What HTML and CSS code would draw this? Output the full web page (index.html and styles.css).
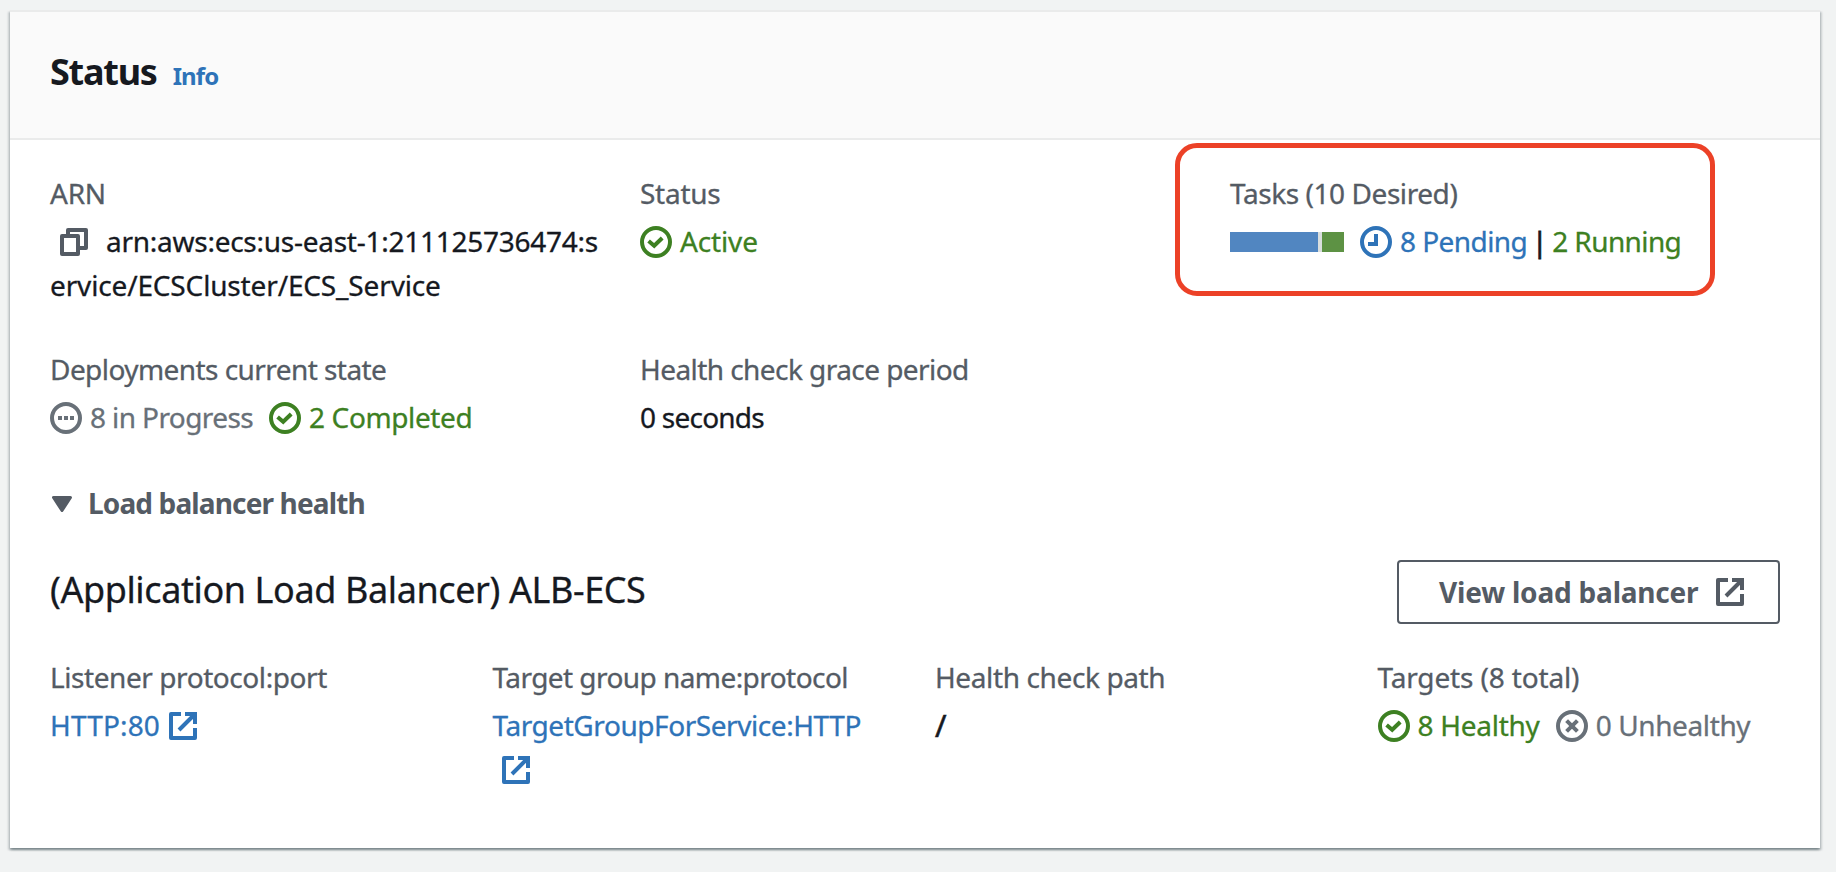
FILE: index.html
```
<!DOCTYPE html>
<html lang="en">
<head>
<meta charset="utf-8">
<title>Status</title>
<link rel="stylesheet" href="styles.css">
</head>
<body>
<svg class="defs" aria-hidden="true">
  <symbol id="check" viewBox="0 0 16 16"><circle cx="8" cy="8" r="7"/><path d="M4.3 7.5 7.1 9.9 11.1 6"/></symbol>
  <symbol id="cross" viewBox="0 0 16 16"><circle cx="8" cy="8" r="7"/><path d="M5.3 5.3l5.4 5.4M10.7 5.3l-5.4 5.4"/></symbol>
  <symbol id="dots" viewBox="0 0 16 16"><circle cx="8" cy="8" r="7"/><path d="M4 8h2M7 8h2M10 8h2"/></symbol>
  <symbol id="clock" viewBox="0 0 16 16"><circle cx="8" cy="8" r="7"/><path d="M8 4v5H4"/></symbol>
  <symbol id="external" viewBox="0 0 14 14"><path stroke-linejoin="round" d="M6 1H1v12h12V8"/><path d="M8 1h5v5M13 1 5 9"/></symbol>
  <symbol id="copy" viewBox="0 0 14 14"><path stroke-linejoin="round" d="M1 4h8v9H1zM4 3.5V1h9v9h-3.5"/></symbol>
</svg>

<section class="card">
  <header class="card-header">
    <h2 class="title">Status</h2>
    <a class="info">Info</a>
  </header>

  <div class="card-body">
    <div class="grid three">
      <div>
        <div class="label t-25">ARN</div>
        <div class="value"><svg class="icon small copy"><use href="#copy"/></svg><span class="t-25">arn:aws:ecs:us-east-1:211125736474:s</span><br><span class="t-15">ervice/ECSCluster/ECS_Service</span></div>
      </div>
      <div>
        <div class="label t-25">Status</div>
        <div class="value row green"><svg class="icon"><use href="#check"/></svg><span class="t-15">Active</span></div>
      </div>
      <div class="tasks">
        <div class="label t-42">Tasks (10 Desired)</div>
        <div class="value row">
          <div class="bar"><i class="bar-pending"></i><i class="bar-running"></i></div>
          <svg class="icon blue"><use href="#clock"/></svg><span class="blue t-55">8 Pending</span><span class="pipe">|</span><span class="green t-60">2 Running</span>
        </div>
        <div class="highlight"></div>
      </div>
      <div>
        <div class="label t-55">Deployments current state</div>
        <div class="value row">
          <svg class="icon grey"><use href="#dots"/></svg><span class="grey t-60">8 in Progress</span>
          <svg class="icon green next"><use href="#check"/></svg><span class="green t-38">2 Completed</span>
        </div>
      </div>
      <div>
        <div class="label t-55">Health check grace period</div>
        <div class="value t-75">0 seconds</div>
      </div>
    </div>

    <div class="expander">
      <svg class="caret" viewBox="0 0 20 16"><path d="M1.5 1.5h17L10 14.5z"/></svg>
      <span class="expander-text">Load balancer health</span>
    </div>

    <div class="balancer">
      <h3 class="subtitle">(Application Load Balancer) ALB-ECS</h3>
      <button class="button"><span>View load balancer</span><svg class="icon small"><use href="#external"/></svg></button>
    </div>

    <div class="grid four">
      <div>
        <div class="label t-42">Listener protocol:port</div>
        <div class="value row blue"><span class="wide">HTTP:80</span><svg class="icon small"><use href="#external"/></svg></div>
      </div>
      <div>
        <div class="label t-55">Target group name:protocol</div>
        <div class="value blue"><span class="t-42">TargetGroupForService:HTTP</span><br><svg class="icon small wrapped"><use href="#external"/></svg></div>
      </div>
      <div>
        <div class="label t-38">Health check path</div>
        <div class="value slash">/</div>
      </div>
      <div>
        <div class="label t-15">Targets (8 total)</div>
        <div class="value row">
          <svg class="icon green"><use href="#check"/></svg><span class="green t-25">8 Healthy</span>
          <svg class="icon grey next"><use href="#cross"/></svg><span class="grey t-38">0 Unhealthy</span>
        </div>
      </div>
    </div>
  </div>
</section>
</body>
</html>
```
FILE: styles.css
```
* { box-sizing: border-box; }

body {
  margin: 0;
  padding: 10px 16px 24px 10px;
  height: 872px;
  background: #f1f3f3;
  color: #16191f;
  font: 28px/44px "Noto Sans", "Open Sans", sans-serif;
}

.defs { position: absolute; width: 0; height: 0; }

.card {
  height: 838px;
  border-top: 2px solid #eaebeb;
  background: #fff;
  box-shadow:
    0 2px 2px 0 rgba(0, 28, 36, .3),
    2px 2px 2px 0 rgba(0, 28, 36, .15),
    -2px 2px 2px 0 rgba(0, 28, 36, .15);
}

.card-header {
  display: flex;
  align-items: baseline;
  gap: 16px;
  height: 128px;
  padding: 38px 40px 0;
  border-bottom: 2px solid #eaebeb;
  background: #fafafa;
}

.title { margin: 0; font-size: 36px; line-height: 44px; letter-spacing: -1.25px; }
.info { color: #2e73b8; font-size: 24px; font-weight: 700; letter-spacing: -.9px; }

.card-body { padding: 31px 40px 0; }

.grid { display: grid; column-gap: 40px; row-gap: 40px; white-space: nowrap; -webkit-text-stroke: .3px currentColor; }
.three { grid-template-columns: repeat(3, 1fr); }
.four { grid-template-columns: repeat(4, 1fr); }
.grid > div { min-width: 0; }

.label { margin-bottom: 4px; color: #545b64; }
.row { display: flex; align-items: center; }

.icon {
  flex: none;
  width: 32px;
  height: 32px;
  margin: 2px 8px 0 0;
  fill: none;
  stroke: currentColor;
  stroke-width: 2;
}
.icon.small { width: 28px; height: 28px; margin-right: 0; }
.icon.next { margin-left: 16px; }
.icon.copy { margin: 0 18px 0 10px; color: #545b64; vertical-align: -4px; }
.icon.wrapped { margin: 0 0 0 9px; vertical-align: -4px; }

.blue { color: #2e73b8; }
.green { color: #3d8022; }
.grey { color: #687078; }

.t-15 { letter-spacing: -.15px; }
.t-25 { letter-spacing: -.26px; }
.t-38 { letter-spacing: -.38px; }
.t-42 { letter-spacing: -.43px; }
.t-55 { letter-spacing: -.56px; }
.t-60 { letter-spacing: -.6px; }
.t-75 { letter-spacing: -.76px; }
.wide { margin-right: 9px; letter-spacing: .15px; }
.slash { font-size: 31px; -webkit-text-stroke-width: .6px; }

.tasks { position: relative; }
.bar {
  display: flex;
  justify-content: space-between;
  width: 114px;
  height: 20px;
  margin: 2px 16px 0 0;
  background: #d9dede;
}
.bar-pending { width: 88px; background: #5186c1; }
.bar-running { width: 22px; background: #5d9244; }
.pipe { width: 25px; text-align: center; -webkit-text-stroke-width: .8px; }
.highlight {
  position: absolute;
  left: -55px;
  top: -28px;
  width: 540px;
  height: 153px;
  border: 5px solid #ec4127;
  border-radius: 22px;
}

.expander {
  display: flex;
  align-items: center;
  gap: 16px;
  margin-top: 42px;
  padding-left: 2px;
  color: #545b64;
  font-weight: 700;
}
.expander-text { letter-spacing: -.86px; }
.caret {
  width: 20px;
  height: 16px;
  margin-top: 2px;
  fill: currentColor;
  stroke: currentColor;
  stroke-width: 3;
  stroke-linejoin: round;
}

.balancer {
  display: flex;
  justify-content: space-between;
  align-items: flex-start;
  margin: 35px 0 31px;
}
.subtitle { margin: 8px 0 0; font-size: 36px; font-weight: 400; line-height: 44px; letter-spacing: -.4px; -webkit-text-stroke: .3px currentColor; }
.button {
  display: flex;
  justify-content: space-between;
  align-items: center;
  width: 383px;
  height: 64px;
  padding: 0 34px 0 40px;
  border: 2px solid #545b64;
  border-radius: 4px;
  background: #fff;
  color: #545b64;
  font: 700 28px/44px "Noto Sans", "Open Sans", sans-serif;
  letter-spacing: -.2px;
}
.button .icon { margin-top: 0; }
```
